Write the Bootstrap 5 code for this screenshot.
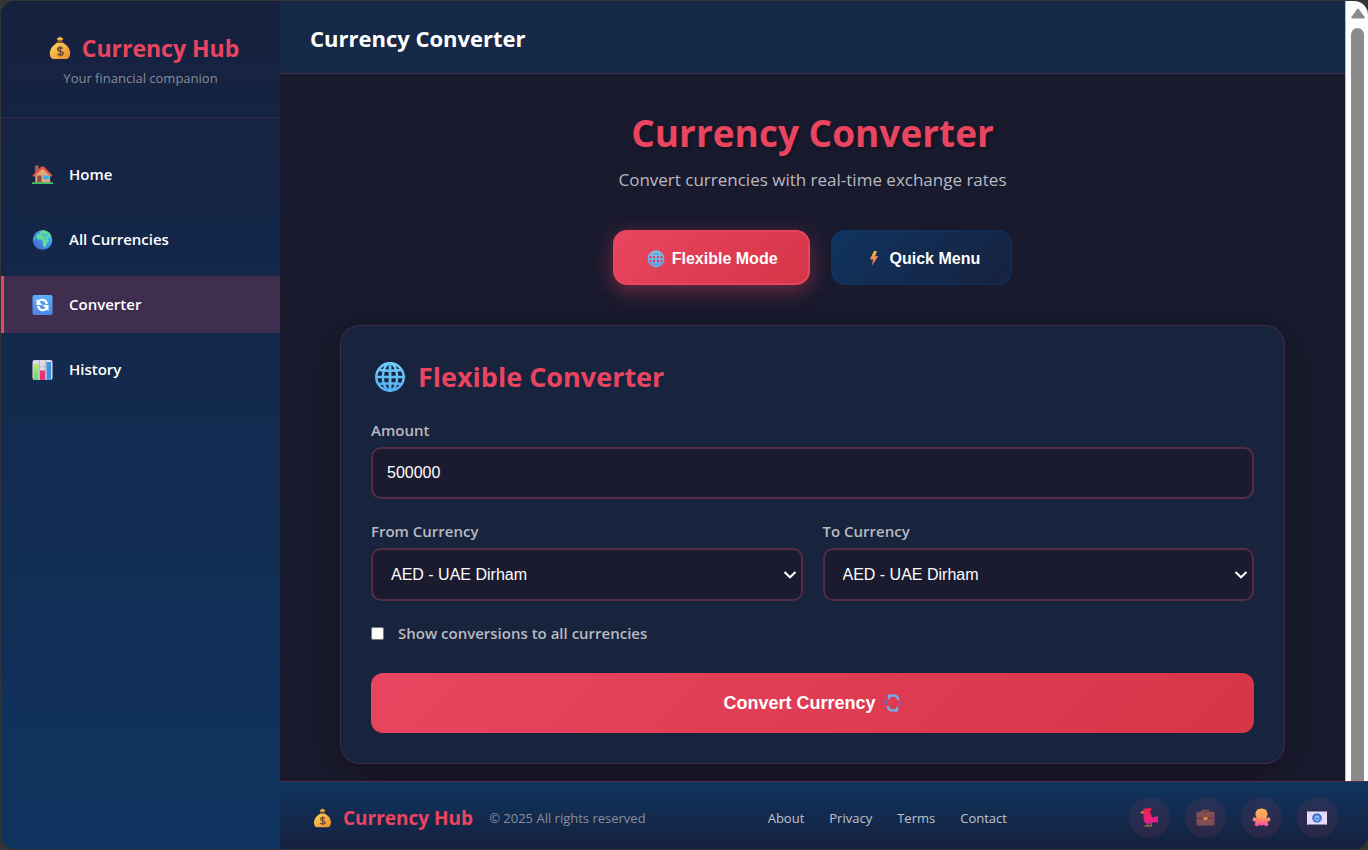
<!DOCTYPE html>
<html lang="en">
<head>
<meta charset="utf-8">
<meta name="viewport" content="width=device-width, initial-scale=1">
<title>Currency Hub - Converter</title>
<link href="https://cdn.jsdelivr.net/npm/bootstrap@5.3.0/dist/css/bootstrap.min.css" rel="stylesheet">
<style>
:root{--accent:#e94560;--night:#1a1a2e;--navy:#16213e;--ocean:#0f3460;--line:rgba(233,69,96,.2)}
body{background:#333436;font-family:"Open Sans","Noto Sans",sans-serif;color:#fff;font-size:15px}
.app-frame{height:100vh;min-height:640px;padding:1px 0 1px 1px}
.app-shell{border-radius:14px;overflow:hidden;background:var(--night)}
.side{width:279px;background:linear-gradient(180deg,var(--navy) 0%,var(--ocean) 100%)}
.side-head{height:117px;padding-top:29px;border-bottom:1px solid var(--line)}
.brand-name{color:var(--accent);font-weight:700;font-size:23px;line-height:36px}
.brand-sm{font-size:19px;line-height:30px}
.tagline{color:#888c96;font-size:13px;line-height:24px}
.side-nav{padding-top:28px;gap:8px}
.side-nav .nav-link{height:57px;padding:0 0 0 28px;gap:16px;border-left:3px solid transparent;color:#fff;font-weight:600;font-size:15px;border-radius:0}
.side-nav .nav-link.active{background:rgba(233,69,96,.2);border-left-color:var(--accent)}
.topbar{height:73px;background:#162947;border-bottom:1px solid var(--line);padding:2px 30px 0}
.topbar-title{font-size:22px;font-weight:700;line-height:32px}
.content{padding:0 60px;overflow-y:auto;scrollbar-width:none}
.content::-webkit-scrollbar{display:none}
.page-title{color:var(--accent);font-weight:700;font-size:37px;line-height:48px;padding-top:35px;text-shadow:2px 2px 4px rgba(0,0,0,.3)}
.page-sub{color:#b9bac0;font-size:17px;line-height:28px;margin-top:9px}
.modes{gap:21px;margin:36px 0 40px}
.mode-btn{height:55px;border-radius:14px;border:2px solid rgba(15,52,96,.5);color:#fff!important;font:bold 16px "Liberation Sans",Arial,sans-serif;background:linear-gradient(135deg,var(--ocean),var(--navy)) border-box;padding:2px 30px 0 32px;gap:7px}
.mode-btn.active{border-color:var(--accent);background:linear-gradient(135deg,var(--accent),#d63447);box-shadow:0 6px 20px rgba(233,69,96,.4)}
.panel{background:#18233e;border:1px solid var(--line);border-radius:20px;padding:30px;box-shadow:0 10px 40px rgba(0,0,0,.3)}
.panel-title{color:var(--accent);font-weight:700;font-size:27px;line-height:42px;gap:9px;margin:0 0 21px}
.field-label{color:#b9bac0;font-weight:600;font-size:15px;line-height:22px;margin:0 0 6px}
.field-group{margin-bottom:21px}
.field{height:52px;background-color:#1b1b30;border:2px solid #552c44;border-radius:10px;color:#fff;font:16px "Liberation Sans",Arial,sans-serif}
.field:focus{background-color:#1b1b30;color:#fff;border-color:var(--accent);box-shadow:none}
input.field{padding:0 14px}
select.field{height:53px;padding:0 36px 0 18px;background-image:url("data:image/svg+xml,%3csvg xmlns='http://www.w3.org/2000/svg' viewBox='0 0 14 10'%3e%3cpath fill='none' stroke='%23fff' stroke-width='2' d='M1.5 2 7 7.3 12.5 2'/%3e%3c/svg%3e");background-repeat:no-repeat;background-position:right 4px center;background-size:14px 10px}
.pair{gap:20px}
.tick-row{gap:14px;margin:21px 0 29px}
.tick{width:13px;height:13px;margin:0}
.convert{height:60px;border:0;border-radius:12px;color:#fff!important;font:bold 18px "Liberation Sans",Arial,sans-serif;background:linear-gradient(135deg,var(--accent),#d63447)}
.rail{width:23px;background:#fdfdfd;border-left:1px solid #b8bac2;padding:7px 5px 0 5px}
.rail-thumb{width:13px;background:#8b8b8b;border-radius:7px 7px 0 0;margin-top:9px}
.foot{height:68px;padding:4px 30px 0;border-top:1px solid rgba(233,69,96,.3);background:linear-gradient(180deg,var(--ocean),var(--navy));line-height:20px}
.copy{color:#888f9c;font-size:13px}
.foot-nav{gap:25px}
.foot-link{color:#c0c3ca;font-size:13px;text-decoration:none}
.foot-link:hover{color:var(--accent)}
.socials{gap:15px}
.social{width:41px;height:41px;border-radius:50%;background:rgba(233,69,96,.1)}
svg{display:block;flex:none}
</style>
</head>
<body>
<svg width="0" height="0" class="position-absolute" aria-hidden="true">
  <defs>
    <linearGradient id="gGold" x1="0" y1="0" x2="1" y2="1"><stop offset="0" stop-color="#ffd95a"/><stop offset="1" stop-color="#e98a2d"/></linearGradient>
    <linearGradient id="gSea" x1="1" y1="0" x2="0" y2="1"><stop offset="0" stop-color="#35c8ff"/><stop offset="1" stop-color="#4a5cd0"/></linearGradient>
    <linearGradient id="gWeb" x1="0" y1="0" x2="0" y2="1"><stop offset="0" stop-color="#6fd0fb"/><stop offset="1" stop-color="#52aef2"/></linearGradient>
    <linearGradient id="gBolt" x1="0" y1="0" x2="0" y2="1"><stop offset="0" stop-color="#ffb84a"/><stop offset="1" stop-color="#e9605a"/></linearGradient>
    <linearGradient id="gBird" x1="0" y1="0" x2="0" y2="1"><stop offset="0" stop-color="#f3213e"/><stop offset="1" stop-color="#e0209a"/></linearGradient>
    <linearGradient id="gOcto" x1="0" y1="0" x2="0" y2="1"><stop offset="0" stop-color="#f7b95c"/><stop offset=".5" stop-color="#fb9a5e"/><stop offset="1" stop-color="#f9489f"/></linearGradient>
    <linearGradient id="gBlue" x1="0" y1="0" x2="0" y2="1"><stop offset="0" stop-color="#5cb0fb"/><stop offset="1" stop-color="#4e86e4"/></linearGradient>
    <linearGradient id="gGreen" x1="0" y1="0" x2="0" y2="1"><stop offset="0" stop-color="#b5ee62"/><stop offset="1" stop-color="#6fce7c"/></linearGradient>
    <symbol id="bag" viewBox="0 0 24 26">
      <path d="m8.500 2.500 2-.500L12 .5l1.500 1.500 2 .5-1.500 3h-4z" fill="#f6b73e"/>
      <path d="M9 7h6c4.500 3 8 6.500 8 11.500 0 5-2.500 6.500-5 6.500H6c-3 0-5-1.500-5-6.500C1 13.500 5 10 9 7z" fill="url(#gGold)"/>
      <path d="M9.500 4.500h5v3h-5z" fill="#8a5632"/>
      <path d="M15 13.700c-.5-1.300-5.500-1.900-5.500.8 0 2.700 5.800 1.400 5.800 4.200 0 2.700-5.400 2.400-6 .4M12.300 10.700v11.500" fill="none" stroke="#6d4b35" stroke-width="1.700"/>
    </symbol>
    <symbol id="house" viewBox="0 0 22 20">
      <path d="M3 0h4v8H3z" fill="#9c6158"/><path d="M3.500 9 11 2l8 8v8h-15.500z" fill="#e3a878"/>
      <path d="M.5 10.500 9.500 1h3l9 9.500-1.500 1.500L11 3.500 2 12z" fill="#e0563f"/>
      <path d="M5.500 10.500H10V18H5.500z" fill="#855349"/><path d="M12 10.500h6v4h-6z" fill="#35b0f0"/>
      <path d="M0 17.500h22v2H0z" fill="#43c069"/>
    </symbol>
    <symbol id="earth" viewBox="0 0 20 20">
      <circle cx="10" cy="10" r="9.800" fill="url(#gSea)"/>
      <path d="M9 .4c4-.8 8 1.600 9.500 5L17 8l-2 .3L16.500 11l-2 2-1.500 4-1.500.6L10 14l.5-3-2-1.500-3.500-.3L3.500 6.700 5 4l3-.5L7.500 2z" fill="#5fdc9c"/>
      <path d="m10 3.500 2 1.300 3.200.2L13 6.300l-3-.8zM12 8l2 2.200" fill="none" stroke="#3aa9d5"/>
      <path d="m1 7 2 1.500L2 10z" fill="#5fdc9c"/>
    </symbol>
    <symbol id="swap" viewBox="0 0 20 20">
      <rect width="20" height="20" rx="2" fill="url(#gBlue)"/>
      <path d="M6 6.500C8.500 3.600 13.500 4.300 14.500 9M14 13.500C11.500 16.400 6.500 15.700 5.500 11" fill="none" stroke="#fff" stroke-width="2.200"/>
      <path d="M4 4v6h6zM16 16v-6h-6z" fill="#fff"/>
    </symbol>
    <symbol id="bars" viewBox="0 0 20 20">
      <rect width="20" height="20" rx="2" fill="#ddd8e6"/>
      <path d="M0 7h20M0 13h20M7 0v20M13 0v20" stroke="#bdb6c9"/>
      <path d="M1 4h5v16H2l-1-1z" fill="url(#gGreen)"/><path d="M7.500 10.500h5V20h-5z" fill="#e23476"/><path d="M14 2h4.500v17.500l-1 .5H14z" fill="#3b94de"/>
    </symbol>
    <symbol id="web" viewBox="0 0 32 32">
      <g fill="none" stroke="url(#gWeb)" stroke-width="2.500"><circle cx="16" cy="16" r="13.700"/><ellipse cx="16" cy="16" rx="7.200" ry="13.700"/><path d="M16 2v28M16.100 2v28M2 16h28.100v.1M4.500 9q11.500 1.500 23 .1M4.500 23q11.500-1.500 23 .1"/></g>
      <path d="M16 2v28" stroke="#5fbdf6" stroke-width="2.500"/>
    </symbol>
    <symbol id="bolt" viewBox="0 0 10 16"><path d="M5 0h3L6.500 5.500H9.500L2.500 16 4 9H.5z" fill="url(#gBolt)"/></symbol>
    <symbol id="turn" viewBox="0 0 18 18">
      <path d="M5 5V1.600h6.500L14 4v2" fill="none" stroke="#69b4f0" stroke-width="2.300"/>
      <path d="M13 13v3.400H6.500L4 14v-2" fill="none" stroke="#69b4f0" stroke-width="2.300"/>
      <path d="M2.500 5v6M15.500 7v6M1 7.500v3M17 8v3" stroke="#8a5ab0" stroke-width="1.500"/>
    </symbol>
    <symbol id="bird" viewBox="0 0 20 20">
      <path d="M3 2.500C5 0 9.500 0 12.500.8L10.500 4 13 10l6-1.500v6.500h-5c-1 1-3 1.500-5 1.500-4 0-6-3-5-7z" fill="url(#gBird)"/>
      <path d="m3.500 3-3.500 2 3.500 1z" fill="#e8a149"/><path d="M8 16v3m3.500-3v3M4.500 19h8" stroke="#c87845" stroke-width="1.200"/><path d="M7 8c0 5 2 6 6 5l1-2c-3 1-5 0-7-3z" fill="#f32a64"/>
    </symbol>
    <symbol id="case" viewBox="0 0 20 18">
      <path d="M7 4V1.500h6V4" fill="none" stroke="#815450" stroke-width="1.500"/><rect x=".5" y="3" width="19" height="14.500" rx="1" fill="#834e54"/><path d="M.5 10h19" stroke="#5a3646"/><path d="M8 8.500h4v3H8z" fill="#f0883c"/>
    </symbol>
    <symbol id="octo" viewBox="0 0 20 20">
      <path d="M10 .5c4.500 0 6.500 3 6.300 6.500-.2 2-1.300 3-1.300 4l3-1.500 1.500 2.500-1 2-2.500.5 1.500 3-2.500 2-3-2-2 1.500-2-1.500-3 2-2.500-2 1.500-3-2.500-.5-1-2L2 9.500 5 11c0-1-1.100-2-1.300-4C3.500 3.500 5.500.5 10 .5z" fill="url(#gOcto)"/>
    </symbol>
    <symbol id="mail" viewBox="0 0 20 14">
      <path d="M0 .5h20v13H0z" fill="#e9defa"/><path d="m0 .5 7 6.500-7 6.500M20 .5 13 7l7 6.500" fill="none" stroke="#d6c9ea"/>
      <circle cx="10" cy="7" r="4.800" fill="#3e78d6"/><path d="M12 8.500c-2 2-4.500.5-4-1.800C8.500 4.500 12 4.700 12 7H9.500" fill="none" stroke="#a9c6f5" stroke-width="1.100"/>
    </symbol>
  </defs>
</svg>

<div class="app-frame">
  <div class="app-shell h-100 d-flex">
    <aside class="side d-flex flex-column flex-shrink-0">
      <div class="side-head text-center">
        <div class="brand-name d-flex align-items-center justify-content-center gap-2 ps-1">
          <svg width="28" height="24"><use href="#bag"/></svg><span>Currency Hub</span>
        </div>
        <div class="tagline">Your financial companion</div>
      </div>
      <nav class="side-nav nav flex-column flex-nowrap" aria-label="Main">
        <a class="nav-link d-flex align-items-center" href="#home"><svg width="21" height="20"><use href="#house"/></svg>Home</a>
        <a class="nav-link d-flex align-items-center" href="#currencies"><svg width="21" height="20"><use href="#earth"/></svg>All Currencies</a>
        <a class="nav-link d-flex align-items-center active" aria-current="page" href="#converter"><svg width="21" height="20"><use href="#swap"/></svg>Converter</a>
        <a class="nav-link d-flex align-items-center" href="#history"><svg width="21" height="20"><use href="#bars"/></svg>History</a>
      </nav>
    </aside>

    <div class="d-flex flex-column flex-grow-1 overflow-hidden">
      <div class="d-flex flex-grow-1 overflow-hidden">
        <div class="d-flex flex-column flex-grow-1 overflow-hidden">
          <header class="topbar d-flex align-items-center flex-shrink-0">
            <div class="topbar-title">Currency Converter</div>
          </header>
          <main class="content flex-grow-1">
            <div class="text-center">
              <h1 class="page-title mb-0">Currency Converter</h1>
              <p class="page-sub mb-0">Convert currencies with real-time exchange rates</p>
              <div class="modes d-flex justify-content-center">
                <button type="button" class="mode-btn btn active d-flex align-items-center"><svg width="18" height="18"><use href="#web"/></svg>Flexible Mode</button>
                <button type="button" class="mode-btn btn d-flex align-items-center"><svg width="18" height="15"><use href="#bolt"/></svg>Quick Menu</button>
              </div>
            </div>
            <form class="panel" onsubmit="return false">
              <h2 class="panel-title d-flex align-items-center"><svg width="38" height="32"><use href="#web"/></svg>Flexible Converter</h2>
              <div class="field-group">
                <label class="field-label d-block" for="amount">Amount</label>
                <input class="form-control field" id="amount" type="text" inputmode="decimal" value="500000">
              </div>
              <div class="d-flex pair">
                <div class="flex-fill">
                  <label class="field-label d-block" for="from">From Currency</label>
                  <select class="form-select field" id="from"><option>AED - UAE Dirham</option></select>
                </div>
                <div class="flex-fill">
                  <label class="field-label d-block" for="to">To Currency</label>
                  <select class="form-select field" id="to"><option>AED - UAE Dirham</option></select>
                </div>
              </div>
              <div class="d-flex align-items-center tick-row">
                <input class="tick" type="checkbox" id="all">
                <label class="field-label m-0" for="all">Show conversions to all currencies</label>
              </div>
              <button type="submit" class="convert btn w-100 d-flex align-items-center justify-content-center gap-2">Convert Currency <svg width="18" height="18"><use href="#turn"/></svg></button>
            </form>
          </main>
        </div>
        <div class="rail d-flex flex-column flex-shrink-0" aria-hidden="true">
          <svg width="14" height="11" viewBox="0 0 14 11"><path d="M7 1.500 12.800 9.500H1.200z" fill="#8b8b8b" stroke="#8b8b8b" stroke-width="2" stroke-linejoin="round"/></svg>
          <div class="rail-thumb flex-grow-1"></div>
        </div>
      </div>
      <footer class="foot d-flex align-items-center justify-content-between flex-shrink-0">
        <div class="d-flex align-items-center gap-3">
          <div class="brand-name brand-sm d-flex align-items-center gap-2"><svg width="25" height="20"><use href="#bag"/></svg><span>Currency Hub</span></div>
          <span class="copy">© 2025 All rights reserved</span>
        </div>
        <nav class="d-flex foot-nav" aria-label="Footer">
          <a class="foot-link" href="#about">About</a>
          <a class="foot-link" href="#privacy">Privacy</a>
          <a class="foot-link" href="#terms">Terms</a>
          <a class="foot-link" href="#contact">Contact</a>
        </nav>
        <div class="d-flex socials">
          <a class="social d-flex align-items-center justify-content-center" href="#twitter" aria-label="Twitter"><svg width="19" height="19"><use href="#bird"/></svg></a>
          <a class="social d-flex align-items-center justify-content-center" href="#linkedin" aria-label="LinkedIn"><svg width="19" height="17"><use href="#case"/></svg></a>
          <a class="social d-flex align-items-center justify-content-center" href="#github" aria-label="GitHub"><svg width="19" height="19"><use href="#octo"/></svg></a>
          <a class="social d-flex align-items-center justify-content-center" href="#email" aria-label="Email"><svg width="20" height="14"><use href="#mail"/></svg></a>
        </div>
      </footer>
    </div>
  </div>
</div>
<script src="https://cdn.jsdelivr.net/npm/bootstrap@5.3.0/dist/js/bootstrap.bundle.min.js"></script>
</body>
</html>
